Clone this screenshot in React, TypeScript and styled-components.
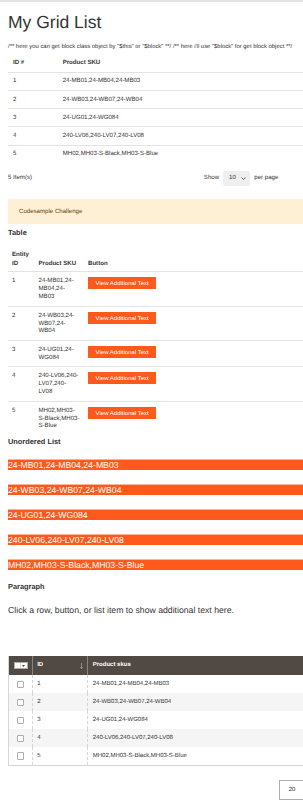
import React, { useState } from "react";
import styled, { createGlobalStyle } from "styled-components";

type Product = {
  id: number;
  skus: string;
  // how the SKU string breaks inside the narrow table column
  lines: string[];
  text: string;
};

const products: Product[] = [
  {
    id: 1,
    skus: "24-MB01,24-MB04,24-MB03",
    lines: ["24-MB01,24-", "MB04,24-", "MB03"],
    text: "Additional text for entity 1.",
  },
  {
    id: 2,
    skus: "24-WB03,24-WB07,24-WB04",
    lines: ["24-WB03,24-", "WB07,24-", "WB04"],
    text: "Additional text for entity 2.",
  },
  {
    id: 3,
    skus: "24-UG01,24-WG084",
    lines: ["24-UG01,24-", "WG084"],
    text: "Additional text for entity 3.",
  },
  {
    id: 4,
    skus: "240-LV06,240-LV07,240-LV08",
    lines: ["240-LV06,240-", "LV07,240-", "LV08"],
    text: "Additional text for entity 4.",
  },
  {
    id: 5,
    skus: "MH02,MH03-S-Black,MH03-S-Blue",
    lines: ["MH02,MH03-", "S-Black,MH03-", "S-Blue"],
    text: "Additional text for entity 5.",
  },
];

const ORANGE = "#ff5a1c";

const GlobalStyle = createGlobalStyle`
  html, body {
    margin: 0;
    padding: 0;
    background: #fff;
  }
  body {
    font-family: "Liberation Sans", Arial, Helvetica, sans-serif;
    font-size: 6.1px;
    line-height: 1.42857;
    color: #333;
    overflow-x: hidden;
    text-rendering: geometricPrecision;
  }
`;

const Page = styled.div`
  border-top: 2px solid #e2e2e2;
  padding: 0 0 0 8px;
`;

const Title = styled.h1`
  margin: 10px 0 0;
  font-size: 17.5px;
  line-height: 21px;
  font-weight: 400;
  color: #333;
`;

const Comment = styled.div`
  margin-top: 10px;
  font-size: 5.9px;
  line-height: 8.7px;
  white-space: nowrap;
`;

const SimpleTable = styled.table`
  width: 100%;
  margin-top: 3px;
  border-collapse: collapse;

  th,
  td {
    text-align: left;
    padding: 4.6px 5px;
    line-height: 8px;
  }
  th {
    font-weight: 700;
  }
  th:first-child {
    box-sizing: border-box;
    width: 49.7px;
  }
  tbody tr {
    border-top: 1px solid #e3e3e3;
    cursor: pointer;
  }
`;

const Toolbar = styled.div`
  display: flex;
  align-items: center;
  justify-content: space-between;
  height: 15px;
  margin-top: 8.5px;
  padding-right: 24.7px;
`;

const Limiter = styled.div`
  display: flex;
  align-items: center;
  gap: 4px;
`;

const FakeSelect = styled.div`
  display: flex;
  align-items: center;
  gap: 5px;
  box-sizing: border-box;
  width: 26.7px;
  height: 15px;
  padding-left: 6px;
  margin-right: 0.5px;
  border-radius: 2px;
  background: #efefef;
`;

const Notice = styled.div`
  margin-top: 12.3px;
  padding: 0 11px;
  height: 25.4px;
  line-height: 25.4px;
  background: #fdf0d5;
  color: #6f4400;
`;

const SectionTitle = styled.h3<{ $top: number }>`
  margin: ${(p) => p.$top}px 0 0;
  font-size: 7.4px;
  line-height: 9px;
  font-weight: 700;
  color: #333;
`;

const ButtonTable = styled.table`
  width: 100%;
  margin-top: 9px;
  border-collapse: collapse;
  table-layout: fixed;

  th,
  td {
    box-sizing: border-box;
    text-align: left;
    padding: 0 4px;
  }
  th {
    font-weight: 700;
    line-height: 8.4px;
    vertical-align: bottom;
    padding-top: 4.8px;
    padding-bottom: 3.4px;
  }
  th:nth-child(1) {
    width: 26.5px;
  }
  th:nth-child(2) {
    width: 49.5px;
  }
  td {
    vertical-align: top;
    line-height: 7.9px;
    padding-top: 5px;
    padding-bottom: 4.6px;
  }
  tbody tr {
    border-top: 1px solid #e3e3e3;
  }
`;

const SkuLine = styled.span`
  display: block;
  white-space: nowrap;
`;

const ActionButton = styled.button`
  box-sizing: border-box;
  height: 12px;
  padding: 0 6.6px;
  border: 1px solid ${ORANGE};
  background: ${ORANGE};
  color: #fff;
  font-family: inherit;
  font-size: 6px;
  line-height: 10px;
  white-space: nowrap;
  cursor: pointer;
`;

const SkuList = styled.ul`
  list-style: none;
  margin: 12.8px 0 0;
  padding: 0;
`;

const SkuItem = styled.li`
  box-sizing: border-box;
  height: 11.7px;
  margin-bottom: 13.3px;
  border-top: 1px solid #ffb394;
  background: ${ORANGE};
  color: #fff;
  font-size: 8.7px;
  line-height: 10.4px;
  cursor: pointer;

  &:last-child {
    margin-bottom: 0;
  }
`;

const Output = styled.p`
  margin: 13px 0 0;
  font-size: 8.7px;
  line-height: 12.4px;
`;

const DataGrid = styled.table`
  width: 100%;
  margin-top: 40px;
  border-collapse: collapse;
  table-layout: fixed;
  border-left: 1px solid #d6d6d6;
  border-bottom: 1px solid #d6d6d6;

  th,
  td {
    box-sizing: border-box;
    text-align: left;
    padding: 0 4.5px;
    font-size: 6px;
  }
  th {
    height: 19px;
    background: #514943;
    color: #fff;
    font-weight: 700;
    border-left: 1px solid #8a837f;
  }
  th:first-child {
    border-left: none;
  }
  th:nth-child(1) {
    width: 23.7px;
  }
  th:nth-child(2) {
    width: 55.6px;
  }
  td {
    height: 18px;
    border-left: 1px dashed #d6d6d6;
    color: #333;
  }
  td:first-child {
    border-left: none;
  }
  tbody tr:nth-child(even) td {
    background: #f5f5f5;
  }
`;

const HeadCell = styled.div`
  display: flex;
  align-items: center;
  justify-content: space-between;
`;

const MultiSelect = styled.div`
  display: flex;
  box-sizing: border-box;
  width: 13.4px;
  height: 6.8px;
  margin-left: 0.8px;
  background: #fff;
  border: 1px solid #adadad;
`;

const MultiToggle = styled.div`
  display: flex;
  align-items: center;
  justify-content: center;
  margin-left: auto;
  width: 5.4px;
  border-left: 1px solid #d6d6d6;
`;

const CheckBox = styled.span`
  display: block;
  box-sizing: border-box;
  width: 7.3px;
  height: 7.3px;
  margin: 0 auto;
  border: 1px solid #adadad;
  border-radius: 1px;
  background: #fff;
`;

const Pager = styled.div`
  display: flex;
  justify-content: flex-end;
  margin-top: 14px;
  margin-right: -8px;
`;

const PageSize = styled.div`
  box-sizing: border-box;
  width: 32px;
  height: 20px;
  padding-left: 8.7px;
  line-height: 18px;
  border: 1px solid #adadad;
  color: #303030;
`;

const Chevron = () => (
  <svg width="5" height="3" viewBox="0 0 5 3" aria-hidden="true">
    <path d="M0.5 0.5 L2.5 2.5 L4.5 0.5" fill="none" stroke="#333" strokeWidth="0.8" />
  </svg>
);

const SortArrow = () => (
  <svg width="3" height="6" viewBox="0 0 3 6" aria-hidden="true">
    <path d="M1.5 0 V5.5 M0.3 4.2 L1.5 5.6 L2.7 4.2" fill="none" stroke="#bdb6b1" strokeWidth="0.6" />
  </svg>
);

const TinyTriangle = () => (
  <svg width="3" height="2" viewBox="0 0 3 2" aria-hidden="true">
    <path d="M0 0 H3 L1.5 2 Z" fill="#514943" />
  </svg>
);

const App = () => {
  const [message, setMessage] = useState(
    "Click a row, button, or list item to show additional text here."
  );

  return (
    <>
      <GlobalStyle />
      <Page>
        <Title>My Grid List</Title>
        <Comment>
          /** here you can get block class object by "$this" or "$block" **/ /** here i'll use
          "$block" for get block object **/
        </Comment>

        <SimpleTable>
          <thead>
            <tr>
              <th>ID #</th>
              <th>Product SKU</th>
            </tr>
          </thead>
          <tbody>
            {products.map((p) => (
              <tr key={p.id} onClick={() => setMessage(p.text)}>
                <td>{p.id}</td>
                <td>{p.skus}</td>
              </tr>
            ))}
          </tbody>
        </SimpleTable>

        <Toolbar>
          <span>5 Item(s)</span>
          <Limiter>
            <span>Show</span>
            <FakeSelect>
              <span>10</span>
              <Chevron />
            </FakeSelect>
            <span>per page</span>
          </Limiter>
        </Toolbar>

        <Notice>Codesample Challenge</Notice>

        <SectionTitle $top={4.3}>Table</SectionTitle>
        <ButtonTable>
          <thead>
            <tr>
              <th>Entity ID</th>
              <th>Product SKU</th>
              <th>Button</th>
            </tr>
          </thead>
          <tbody>
            {products.map((p) => (
              <tr key={p.id}>
                <td>{p.id}</td>
                <td>
                  {p.lines.map((line) => (
                    <SkuLine key={line}>{line}</SkuLine>
                  ))}
                </td>
                <td>
                  <ActionButton onClick={() => setMessage(p.text)}>
                    View Additional Text
                  </ActionButton>
                </td>
              </tr>
            ))}
          </tbody>
        </ButtonTable>

        <SectionTitle $top={1.9}>Unordered List</SectionTitle>
        <SkuList>
          {products.map((p) => (
            <SkuItem key={p.id} onClick={() => setMessage(p.text)}>
              {p.skus}
            </SkuItem>
          ))}
        </SkuList>

        <SectionTitle $top={11.5}>Paragraph</SectionTitle>
        <Output>{message}</Output>

        <DataGrid>
          <thead>
            <tr>
              <th>
                <MultiSelect>
                  <MultiToggle>
                    <TinyTriangle />
                  </MultiToggle>
                </MultiSelect>
              </th>
              <th>
                <HeadCell>
                  <span>ID</span>
                  <SortArrow />
                </HeadCell>
              </th>
              <th>Product skus</th>
            </tr>
          </thead>
          <tbody>
            {products.map((p) => (
              <tr key={p.id}>
                <td>
                  <CheckBox />
                </td>
                <td>{p.id}</td>
                <td>{p.skus}</td>
              </tr>
            ))}
          </tbody>
        </DataGrid>

        <Pager>
          <PageSize>20</PageSize>
        </Pager>
      </Page>
    </>
  );
};

export default App;
